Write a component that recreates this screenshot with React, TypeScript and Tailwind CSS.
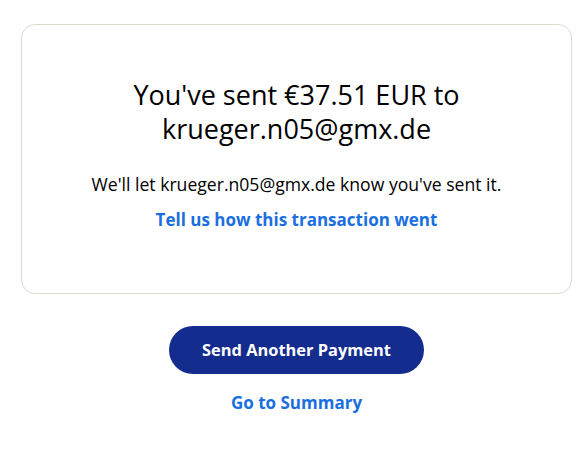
export default function App() {
  return (
    <div className="w-[588px] h-[466px] bg-white" style={{ fontFamily: "'Open Sans', 'Noto Sans', sans-serif" }}>
      <div className="pt-6 pl-[21px] pr-[16px]">
        <div className="border border-[#dcd9cf] rounded-[14px] pt-[53px] pb-[61px] flex flex-col items-center text-center">
          <h1 className="text-[27px] leading-[34px] text-black font-normal w-[380px]">
            You've sent €37.51 EUR to krueger.n05@gmx.de
          </h1>
          <p className="mt-[26px] text-[17.6px] leading-[24px] text-black">
            We'll let krueger.n05@gmx.de know you've sent it.
          </p>
          <a className="mt-[12px] text-[17px] leading-[24px] font-bold text-[#1a6fe0]">
            Tell us how this transaction went
          </a>
        </div>
      </div>
      <div className="flex flex-col items-center mt-[32px] pl-[21px] pr-[16px]">
        <button className="w-[255px] h-[48px] rounded-full bg-[#142c8e] text-white text-[16.4px] font-bold">
          Send Another Payment
        </button>
        <a className="mt-[17px] text-[17px] leading-[24px] font-bold text-[#1a6fe0]">Go to Summary</a>
      </div>
    </div>
  );
}
